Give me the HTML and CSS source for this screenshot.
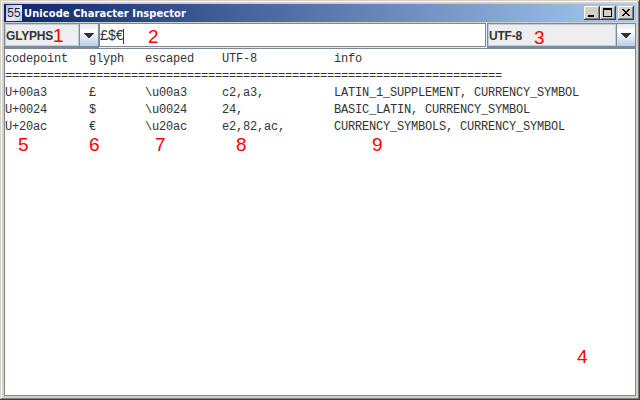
FILE: index.html
```
<!DOCTYPE html>
<html lang="en">
<head>
<meta charset="utf-8">
<title>Unicode Character Inspector</title>
<link rel="stylesheet" href="styles.css">
</head>
<body>
<div class="window">
  <header class="titlebar">
    <span class="app-icon">55</span>
    <h1 class="title">Unicode Character Inspector</h1>
    <div class="controls">
      <span class="control"><svg width="14" height="12" shape-rendering="crispEdges"><path d="M3 8h6v2H3z"/></svg></span>
      <span class="control"><svg width="14" height="12" shape-rendering="crispEdges"><path fill-rule="evenodd" d="M2 1h9v9H2zM3 3v6h7V3z"/></svg></span>
      <span class="control close"><svg width="14" height="12" shape-rendering="crispEdges"><path d="M3 2h2v1h1v1h2v-1h1v-1h2v1h-1v1h-1v1h-1v1h1v1h1v1h1v1h-2v-1h-1v-1h-2v1h-1v1h-2v-1h1v-1h1v-1h1v-1h-1v-1h-1v-1h-1z"/></svg></span>
    </div>
  </header>
  <div class="toolbar">
    <div class="combo mode">
      <span class="value">GLYPHS</span>
      <span class="arrow"><svg width="10" height="5" shape-rendering="crispEdges"><path d="M0 0h10v1H9v1H8v1H7v1H6v1H4v-1H3v-1H2v-1H1v-1H0z"/></svg></span>
    </div>
    <div class="input"><span>£$€</span><i class="caret"></i></div>
    <div class="combo encoding">
      <span class="value">UTF-8</span>
      <span class="arrow"><svg width="10" height="5" shape-rendering="crispEdges"><path d="M0 0h10v1H9v1H8v1H7v1H6v1H4v-1H3v-1H2v-1H1v-1H0z"/></svg></span>
    </div>
  </div>
  <pre class="output">codepoint   glyph   escaped    UTF-8           info
=======================================================================
U+00a3      £       \u00a3     c2,a3,          LATIN_1_SUPPLEMENT, CURRENCY_SYMBOL
U+0024      $       \u0024     24,             BASIC_LATIN, CURRENCY_SYMBOL
U+20ac      €       \u20ac     e2,82,ac,       CURRENCY_SYMBOLS, CURRENCY_SYMBOL</pre>
  <span class="mark m1">1</span>
  <span class="mark m2">2</span>
  <span class="mark m3">3</span>
  <span class="mark m4">4</span>
  <span class="mark m5">5</span>
  <span class="mark m6">6</span>
  <span class="mark m7">7</span>
  <span class="mark m8">8</span>
  <span class="mark m9">9</span>
</div>
</body>
</html>
```
FILE: styles.css
```
* { box-sizing: border-box; }
body { margin: 0; overflow: hidden; }
.window {
  position: relative;
  width: 640px;
  height: 400px;
  padding: 4px;
  display: flex;
  flex-direction: column;
  background: #d4d0c8;
  box-shadow: inset -1px -1px #404040, inset 1px 1px #d4d0c8, inset -2px -2px #808080, inset 2px 2px #fff;
}
.titlebar {
  height: 18px;
  margin-bottom: 1px;
  flex: none;
  display: flex;
  align-items: center;
  padding: 0 2px;
  background: linear-gradient(90deg, #0a246a, #a6caf0);
}
.app-icon {
  width: 16px;
  height: 16px;
  background: linear-gradient(135deg, #a8bcf8, #e4eaff 60%, #b4c6f8);
  color: #222;
  font: 12px/17px "Liberation Sans", sans-serif;
  text-align: center;
}
.title {
  margin: 0 auto 0 2px;
  padding-top: 1px;
  color: #fff;
  font: bold 11px/18px "DejaVu Sans Condensed", "DejaVu Sans", sans-serif;
  font-stretch: condensed;
  letter-spacing: 0.1px;
  white-space: nowrap;
}
.controls { display: flex; }
.control {
  width: 16px;
  height: 14px;
  padding: 1px;
  background: #d4d0c8;
  box-shadow: inset -1px -1px #404040, inset 1px 1px #fff, inset -2px -2px #808080;
}
.control svg { display: block; }
.close { margin-left: 2px; }
.toolbar {
  height: 25px;
  flex: none;
  display: flex;
  background: #eee;
}
.combo {
  height: 25px;
  display: flex;
  border: 1px solid #7a8a99;
  border-bottom-width: 2px;
  background: #eee;
  font: bold 12px/22px "Liberation Sans", sans-serif;
  color: #333;
}
.mode { width: 95px; }
.encoding { width: 149px; margin-left: 1px; }
.value {
  flex: 1;
  border: 1px solid #b8cfe5;
  line-height: 22px;
  letter-spacing: -0.2px;
  white-space: nowrap;
}
.arrow {
  width: 19px;
  border-left: 1px solid #7a8a99;
  display: flex;
  align-items: center;
  justify-content: center;
  background: linear-gradient(#dde8f3, #fff 30%, #b8cfe5);
  fill: #333;
}
.input {
  flex: 1;
  height: 24px;
  border: 1px solid #7a8a99;
  box-shadow: inset 1px 1px #fff;
  background: #fff;
  display: flex;
  align-items: center;
  padding: 2px 0 0;
  font: 14px/20px "Liberation Mono", monospace;
  letter-spacing: -0.7px;
  color: #333;
}
.caret { width: 1px; height: 15px; background: #333; }
.output {
  flex: 1;
  margin: 0;
  padding: 2px 0 0;
  border: 1px solid #7a8a99;
  background: #fff;
  color: #333;
  font: 12px/17px "Liberation Mono", monospace;
  letter-spacing: -0.2px;
}
.mark {
  position: absolute;
  color: #f00;
  font: 19px/20px "Liberation Sans", sans-serif;
}
.m1 { left: 53px; top: 26px; }
.m2 { left: 148px; top: 27px; }
.m3 { left: 534px; top: 28px; }
.m4 { left: 577px; top: 347px; }
.m5 { left: 18px; top: 135px; }
.m6 { left: 89px; top: 135px; }
.m7 { left: 155px; top: 135px; }
.m8 { left: 236px; top: 135px; }
.m9 { left: 372px; top: 135px; }
```
